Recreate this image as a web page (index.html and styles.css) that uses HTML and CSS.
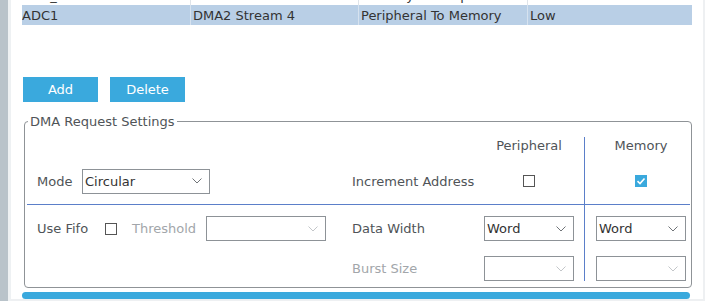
FILE: index.html
```html
<!DOCTYPE html>
<html>
<head>
<meta charset="utf-8">
<link rel="stylesheet" href="styles.css">
</head>
<body>
<div class="app">
  <div class="side"></div>
  <div class="side-gap"></div>
  <div class="main">
    <div class="content">
      <div class="table-view">
        <div class="table">
          <div class="row">
            <div class="cell c1">SPI1_TX</div>
            <div class="cell c2">DMA2 Stream 3</div>
            <div class="cell c3">Memory To Peripheral</div>
            <div class="cell c4">Low</div>
          </div>
          <div class="row sel">
            <div class="cell c1">ADC1</div>
            <div class="cell c2">DMA2 Stream 4</div>
            <div class="cell c3">Peripheral To Memory</div>
            <div class="cell c4">Low</div>
          </div>
        </div>
      </div>
      <div class="buttons">
        <button class="btn">Add</button>
        <button class="btn">Delete</button>
      </div>
      <fieldset class="settings">
        <legend>DMA Request Settings</legend>
        <div class="grid">
          <div class="vline"></div>
          <div class="hdr hdr-p">Peripheral</div>
          <div class="hdr hdr-m"><span>Memory</span></div>

          <div class="cell-l r1">
            <span class="lbl lbl-mode">Mode</span>
            <div class="combo w-mode"><span class="val">Circular</span><svg class="chev" width="10" height="6" viewBox="0 0 10 6"><polyline points="0.5,0.5 5,5 9.5,0.5"/></svg></div>
          </div>
          <div class="cell-lbl r1"><span class="lbl">Increment Address</span></div>
          <div class="cell-p r1"><div class="center"><span class="chk"></span></div></div>
          <div class="cell-m r1"><div class="center"><span class="chk on"><svg width="12" height="12" viewBox="0 0 12 12"><polyline points="2.5,6.2 5,8.5 9.5,3.5"/></svg></span></div></div>

          <div class="hline"></div>

          <div class="cell-l r2">
            <span class="lbl lbl-fifo">Use Fifo</span>
            <span class="chk"></span>
            <span class="lbl dis lbl-thr">Threshold</span>
            <div class="combo w-thr"><span class="val"></span><svg class="chev dis" width="10" height="6" viewBox="0 0 10 6"><polyline points="0.5,0.5 5,5 9.5,0.5"/></svg></div>
          </div>
          <div class="cell-lbl r2"><span class="lbl">Data Width</span></div>
          <div class="cell-p r2"><div class="combo w-word"><span class="val">Word</span><svg class="chev" width="10" height="6" viewBox="0 0 10 6"><polyline points="0.5,0.5 5,5 9.5,0.5"/></svg></div></div>
          <div class="cell-m r2"><div class="combo w-word"><span class="val">Word</span><svg class="chev" width="10" height="6" viewBox="0 0 10 6"><polyline points="0.5,0.5 5,5 9.5,0.5"/></svg></div></div>

          <div class="cell-lbl r3"><span class="lbl dis">Burst Size</span></div>
          <div class="cell-p r3"><div class="combo w-word"><span class="val"></span><svg class="chev dis" width="10" height="6" viewBox="0 0 10 6"><polyline points="0.5,0.5 5,5 9.5,0.5"/></svg></div></div>
          <div class="cell-m r3"><div class="combo w-word"><span class="val"></span><svg class="chev dis" width="10" height="6" viewBox="0 0 10 6"><polyline points="0.5,0.5 5,5 9.5,0.5"/></svg></div></div>
        </div>
      </fieldset>
      <div class="hbar"></div>
    </div>
    <div class="bottom-strip"></div>
  </div>
  <div class="right-strip"></div>
</div>
</body>
</html>
```

FILE: styles.css
```css
* { box-sizing: border-box; }
html, body { margin: 0; padding: 0; background: #ffffff; }
body {
  font-family: "DejaVu Sans", sans-serif;
  font-size: 13px;
  color: #333;
}
.app { display: flex; width: 705px; height: 301px; overflow: hidden; }
.side { width: 8px; background: #b9c3ca; flex: none; }
.side-gap { width: 3px; background: #eef1f3; flex: none; }
.main { flex: 1; display: flex; flex-direction: column; background: #fff; }
.content { height: 299px; display: flex; flex-direction: column; }
.bottom-strip { height: 2px; background: #eef0f2; }
.right-strip { width: 2px; background: #eef0f2; flex: none; }

/* table */
.table-view { height: 25px; overflow: hidden; margin-left: 11px; width: 670px; flex: none; }
.table { margin-top: -15px; }
.row { display: flex; height: 20px; line-height: 15px; }
.row.sel { background: #b9cfe6; }
.cell { padding: 3px 0 0 2px; white-space: nowrap; overflow: hidden; border-left: 1px solid #dfe4ea; }
.row.sel .cell { border-left-color: #d6e2ef; }
.c1 { width: 168px; border-left: none; padding-left: 0; }
.c2 { width: 168px; }
.c3 { width: 169px; }
.c4 { flex: 1; }

/* buttons */
.buttons { display: flex; gap: 12px; margin: 52px 0 0 12px; flex: none; }
.btn {
  width: 75px; height: 25px; border: none; background: #3aa9dd; color: #fff;
  font-family: "DejaVu Sans", sans-serif; font-size: 13px; padding: 0; margin: 0;
}

/* fieldset */
.settings {
  margin: 12px 0 0 13px; width: 668px; padding: 0 0 6px 0;
  border: 1px solid #8f9397; border-radius: 4px; min-width: 0; flex: none;
}
.settings legend {
  margin-left: 3px; padding: 0 2px; color: #4f5458; font-size: 13px; line-height: 15px;
}
.grid {
  display: grid;
  grid-template-columns: 327px 132px 100px 1px 1fr;
  grid-template-rows: 8px 21px 46px 1px 47px 29px;
}
.vline { grid-column: 4; grid-row: 2 / 7; background: #5b7fc9; }
.hline { grid-column: 1 / -1; grid-row: 4; background: #5b7fc9; margin: 0 1px 0 2px; }
.hdr { grid-row: 2; color: #4f5458; line-height: 18px; }
.hdr-p { grid-column: 3; width: 90px; text-align: center; }
.hdr-m { grid-column: 5; padding-left: 11px; }
.hdr-m span { display: block; width: 90px; text-align: center; }

.r1 { grid-row: 3; }
.r2 { grid-row: 5; }
.r3 { grid-row: 6; padding-top: 4px; }
.cell-l, .cell-lbl, .cell-p, .cell-m { display: flex; align-items: center; }
.cell-l { grid-column: 1; padding-left: 12px; }
.cell-lbl { grid-column: 2; }
.cell-p { grid-column: 3; }
.cell-m { grid-column: 5; padding-left: 11px; }
.center { width: 90px; display: flex; justify-content: center; }

.lbl { color: #4f5458; white-space: nowrap; }
.lbl.dis { color: #a2a6aa; }
.lbl-mode { width: 45px; }
.lbl-fifo { width: 68px; }
.lbl-thr { width: 74px; margin-left: 15px; }

.chk {
  width: 12px; height: 12px; border: 1px solid #555; background: #fff; display: inline-block; flex: none;
}
.chk.on { border: none; background: #3aa9dd; }
.chk.on svg { display: block; }
.chk.on polyline { fill: none; stroke: #fff; stroke-width: 1.6; }

.combo {
  height: 25px; border: 1px solid #8d9297; background: #fff;
  display: flex; align-items: center; justify-content: space-between;
  padding: 0 7px 0 2px; color: #333; flex: none;
}
.w-mode { width: 128px; }
.w-thr { width: 120px; }
.w-word { width: 90px; }
.chev polyline { fill: none; stroke: #707478; stroke-width: 1; }
.chev.dis polyline { stroke: #c3c6c9; }

.hbar {
  margin: 4px 0 0 11px; width: 668px; height: 7px; border-radius: 4px; background: #3aa9dd; flex: none;
}
```
